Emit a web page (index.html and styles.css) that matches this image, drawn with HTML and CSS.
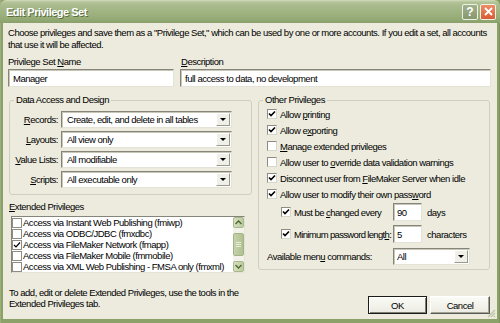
FILE: index.html
```html
<!DOCTYPE html>
<html lang="en">
<head>
    <meta charset="UTF-8">
    <meta name="viewport" content="width=device-width, initial-scale=1.0">
    <title>Edit Privilege Set</title>
    <link rel="stylesheet" href="styles.css">
</head>
<body>
    <div class="window">
        <div class="titlebar">
            <span class="title">Edit Privilege Set</span>
            <div class="caption-buttons">
                <span class="cap-btn help">?</span>
                <span class="cap-btn close">
                    <svg width="9" height="9" viewBox="0 0 9 9"><path d="M1 1 L8 8 M8 1 L1 8" stroke="#fff" stroke-width="1.8" fill="none"/></svg>
                </span>
            </div>
        </div>
        <div class="client">
            <p class="intro">Choose privileges and save them as a "Privilege Set," which can be used by one or more accounts. If you edit a set, all accounts<br>that use it will be affected.</p>

            <div class="name-row">
                <div class="field name-field">
                    <div class="field-label">Privilege Set <u>N</u>ame</div>
                    <div class="textbox">Manager</div>
                </div>
                <div class="field desc-field">
                    <div class="field-label"><u>D</u>escription</div>
                    <div class="textbox">full access to data, no development</div>
                </div>
            </div>

            <div class="main">
                <div class="left-col">
                    <fieldset class="group data-group">
                        <legend>Data Access and Design</legend>
                        <div class="access-grid">
                            <span class="row-label"><u>R</u>ecords:</span>
                            <div class="combo"><span class="combo-value">Create, edit, and delete in all tables</span><span class="combo-arrow"></span></div>
                            <span class="row-label"><u>L</u>ayouts:</span>
                            <div class="combo"><span class="combo-value">All view only</span><span class="combo-arrow"></span></div>
                            <span class="row-label"><u>V</u>alue Lists:</span>
                            <div class="combo"><span class="combo-value">All modifiable</span><span class="combo-arrow"></span></div>
                            <span class="row-label"><u>S</u>cripts:</span>
                            <div class="combo"><span class="combo-value">All executable only</span><span class="combo-arrow"></span></div>
                        </div>
                    </fieldset>

                    <div class="ext-label"><u>E</u>xtended Privileges</div>
                    <div class="listbox">
                        <ul class="list-items">
                            <li><span class="cb small"></span>Access via Instant Web Publishing (fmiwp)</li>
                            <li><span class="cb small"></span>Access via ODBC/JDBC (fmxdbc)</li>
                            <li><span class="cb small"><svg width="8" height="8" viewBox="0 0 8 8"><path d="M1 4 L3 6 L7 1.5" stroke="#000" stroke-width="1.2" fill="none"/></svg></span>Access via FileMaker Network (fmapp)</li>
                            <li><span class="cb small"></span>Access via FileMaker Mobile (fmmobile)</li>
                            <li><span class="cb small"></span>Access via XML Web Publishing - FMSA only (fmxml)</li>
                        </ul>
                        <div class="scrollbar">
                            <span class="sb-btn"><svg width="7" height="5" viewBox="0 0 7 5"><path d="M0.5 4 L3.5 1 L6.5 4" stroke="#4d6a2e" stroke-width="1.4" fill="none"/></svg></span>
                            <span class="sb-gap"></span>
                            <span class="sb-thumb"><i></i><i></i><i></i></span>
                            <span class="sb-gap"></span>
                            <span class="sb-btn"><svg width="7" height="5" viewBox="0 0 7 5"><path d="M0.5 1 L3.5 4 L6.5 1" stroke="#4d6a2e" stroke-width="1.4" fill="none"/></svg></span>
                        </div>
                    </div>
                    <p class="note">To add, edit or delete Extended Privileges, use the tools in the<br>Extended Privileges tab.</p>
                </div>

                <div class="right-col">
                    <fieldset class="group other-group">
                        <legend>Other Privileges</legend>
                        <div class="check-row"><span class="cb checked"><svg width="8" height="8" viewBox="0 0 8 8"><path d="M1 3.5 L3 5.5 L7 1.5" stroke="#000" stroke-width="1.6" fill="none"/></svg></span><span>Allow <u>p</u>rinting</span></div>
                        <div class="check-row"><span class="cb checked"><svg width="8" height="8" viewBox="0 0 8 8"><path d="M1 3.5 L3 5.5 L7 1.5" stroke="#000" stroke-width="1.6" fill="none"/></svg></span><span>Allow e<u>x</u>porting</span></div>
                        <div class="check-row"><span class="cb"></span><span><u>M</u>anage extended privileges</span></div>
                        <div class="check-row"><span class="cb"></span><span>Allow user to <u>o</u>verride data validation warnings</span></div>
                        <div class="check-row"><span class="cb checked"><svg width="8" height="8" viewBox="0 0 8 8"><path d="M1 3.5 L3 5.5 L7 1.5" stroke="#000" stroke-width="1.6" fill="none"/></svg></span><span>Disconnect user from <u>F</u>ileMaker Server when idle</span></div>
                        <div class="check-row"><span class="cb checked"><svg width="8" height="8" viewBox="0 0 8 8"><path d="M1 3.5 L3 5.5 L7 1.5" stroke="#000" stroke-width="1.6" fill="none"/></svg></span><span>Allow user to modify their own pass<u>w</u>ord</span></div>
                        <div class="check-row sub"><span class="cb checked"><svg width="8" height="8" viewBox="0 0 8 8"><path d="M1 3.5 L3 5.5 L7 1.5" stroke="#000" stroke-width="1.6" fill="none"/></svg></span><span class="sub-label">Must be <u>c</u>hanged every</span><span class="textbox small-box">90</span><span class="unit">days</span></div>
                        <div class="check-row sub second"><span class="cb checked"><svg width="8" height="8" viewBox="0 0 8 8"><path d="M1 3.5 L3 5.5 L7 1.5" stroke="#000" stroke-width="1.6" fill="none"/></svg></span><span class="sub-label tight">Minimum password lengt<u>h</u>:</span><span class="textbox small-box">5</span><span class="unit">characters</span></div>
                        <div class="menu-row">
                            <span class="menu-label">Available men<u>u</u> commands:</span>
                            <div class="combo menu-combo"><span class="combo-value">All</span><span class="combo-arrow"></span></div>
                        </div>
                    </fieldset>
                    <div class="buttons">
                        <span class="btn default">OK</span>
                        <span class="btn">Cancel</span>
                    </div>
                </div>
            </div>
        </div>
        <svg class="grip" width="10" height="10" viewBox="0 0 10 10">
            <path d="M9 2 L2 9 M9 5 L5 9 M9 8 L8 9" stroke="#b9c4a2" stroke-width="1.2" fill="none"/>
        </svg>
    </div>
</body>
</html>
```

FILE: styles.css
```css
* {
    box-sizing: border-box;
    margin: 0;
    padding: 0;
}

body {
    width: 500px;
    height: 323px;
    overflow: hidden;
    font-family: 'Liberation Sans', Arial, sans-serif;
    font-size: 9.5px;
    letter-spacing: -0.48px;
    color: #000;
    background: #8ba169;
}

u {
    text-decoration: underline;
    text-underline-offset: 1px;
}

.window {
    position: relative;
    width: 500px;
    height: 323px;
    display: flex;
    flex-direction: column;
    background: linear-gradient(to right, #a9bb8a 0, #8ba169 1px, #8ba169 499px, #6f8650 500px);
}

/* title bar */
.titlebar {
    height: 23px;
    display: flex;
    align-items: center;
    justify-content: space-between;
    padding: 0 4px 0 6px;
    background: linear-gradient(to bottom, #d3dcbd 0, #b4c498 2px, #a8ba8c 6px, #9db17e 14px, #92a873 20px, #8aa06a 23px);
    border-radius: 6px 6px 0 0;
}

.title {
    color: #fff;
    font-weight: bold;
    font-size: 11px;
    letter-spacing: -0.5px;
    text-shadow: 1px 1px 0 #5b6e3f;
}

.caption-buttons {
    display: flex;
    gap: 2px;
}

.cap-btn {
    width: 16px;
    height: 16px;
    display: flex;
    align-items: center;
    justify-content: center;
    border: 1px solid #eef2e4;
    border-radius: 2px;
    color: #fff;
    font-weight: bold;
    font-size: 12px;
    letter-spacing: 0;
}

.cap-btn.help {
    background: linear-gradient(to bottom, #a3b08e, #87976f);
}

.cap-btn.close {
    background: linear-gradient(to bottom, #ee8d66, #d85b32);
}

/* client area */
.client {
    flex: 1;
    margin: 0 3px 4px;
    padding: 4px 6px 0 5px;
    background: #ecebdd;
}

.intro {
    line-height: 12px;
}

.name-row {
    display: flex;
    gap: 6px;
    margin-top: 5px;
}

.name-field {
    width: 166px;
}

.desc-field {
    flex: 1;
}

.field-label {
    line-height: 12px;
    margin-bottom: 1px;
}

.desc-field .field-label {
    padding-left: 1px;
}

.textbox {
    height: 18px;
    display: flex;
    align-items: center;
    padding-left: 4px;
    background: #fff;
    border: 1px solid;
    border-color: #86857a #e4e3d8 #e4e3d8 #86857a;
    box-shadow: inset 1px 1px 0 #c9c7b8;
}

.main {
    display: flex;
    gap: 6px;
    margin-top: 7px;
    padding: 0 1px;
}

.left-col {
    width: 243px;
}

.right-col {
    width: 232px;
}

/* group boxes */
.group {
    border: 1px solid #cfcebf;
    border-radius: 3px;
    min-width: 0;
}

.group legend {
    line-height: 12px;
    padding: 0 2px;
}

.data-group {
    padding: 5px 19px 6px 4px;
}

.other-group legend {
    margin-left: -4px;
}

.access-grid {
    display: grid;
    grid-template-columns: 44px 171px;
    column-gap: 3px;
    row-gap: 3px;
    align-items: center;
}

.row-label {
    text-align: right;
}

.combo {
    height: 17px;
    display: flex;
    align-items: center;
    background: #fff;
    border: 1px solid;
    border-color: #86857a #e4e3d8 #e4e3d8 #86857a;
    box-shadow: inset 1px 1px 0 #c9c7b8;
}

.combo-value {
    flex: 1;
    padding-left: 5px;
}

.combo-arrow {
    width: 14px;
    height: 13px;
    margin-right: 1px;
    display: flex;
    align-items: center;
    justify-content: center;
    background: #f1f0e8;
    border: 1px solid;
    border-color: #ffffff #9a998e #9a998e #ffffff;
}

.combo-arrow::after {
    content: "";
    border-left: 3px solid transparent;
    border-right: 3px solid transparent;
    border-top: 3px solid #000;
}

.ext-label {
    margin-top: 6px;
    line-height: 12px;
}

.listbox {
    display: flex;
    width: 234px;
    height: 57px;
    margin: 3px 0 0 2px;
    background: #fff;
    border: 1px solid;
    border-color: #86857a #e4e3d8 #e4e3d8 #86857a;
}

.list-items {
    flex: 1;
    list-style: none;
}

.list-items li {
    height: 11px;
    display: flex;
    align-items: center;
    white-space: nowrap;
}

.cb {
    width: 10px;
    height: 10px;
    flex: none;
    display: flex;
    align-items: center;
    justify-content: center;
    margin-right: 3px;
    background: #fff;
    border: 1px solid;
    border-color: #8e8d82 #d8d7cc #d8d7cc #8e8d82;
}

.cb.small {
    margin-right: 1px;
    border-color: #8e8d82;
}

.scrollbar {
    width: 11px;
    display: flex;
    flex-direction: column;
    background: #f2f1ea;
}

.sb-btn {
    height: 11px;
    display: flex;
    align-items: center;
    justify-content: center;
    background: linear-gradient(to right, #d6dfc2, #bccb9f);
    border: 1px solid #a8b88c;
    border-radius: 2px;
}

.sb-gap {
    height: 5px;
}

.sb-thumb {
    flex: 1;
    display: flex;
    flex-direction: column;
    align-items: center;
    justify-content: center;
    gap: 1px;
    background: linear-gradient(to right, #c6d2ab, #b0c191);
    border: 1px solid #a3b386;
    border-radius: 2px;
}

.sb-thumb i {
    width: 5px;
    height: 1px;
    background: #e8eedc;
}

.note {
    margin-top: 14px;
    line-height: 11px;
}

/* other privileges */
.other-group {
    padding: 0 6px 4px 8px;
}

.check-row {
    height: 16px;
    display: flex;
    align-items: center;
    white-space: nowrap;
}

.check-row.sub {
    height: 18px;
    margin: 1px 0 0 14px;
}

.check-row.sub.second {
    margin-top: 4px;
}

.sub-label {
    width: 99px;
    flex: none;
    letter-spacing: -0.55px;
}

.sub-label.tight {
    letter-spacing: -0.66px;
}

.small-box {
    width: 29px;
    height: 18px;
    padding-left: 3px;
}

.unit {
    margin-left: 5px;
}

.menu-row {
    display: flex;
    align-items: center;
    margin-top: 5px;
}

.menu-label {
    width: 126px;
}

.menu-combo {
    width: 77px;
}

.menu-combo .combo-value {
    padding-left: 3px;
}

.buttons {
    display: flex;
    justify-content: flex-end;
    gap: 3px;
    margin-top: 26px;
}

.btn {
    width: 60px;
    height: 18px;
    display: flex;
    align-items: center;
    justify-content: center;
    background: linear-gradient(to bottom, #fbfbf7, #ecebe2);
    border: 1px solid;
    border-color: #ffffff #5a5a52 #5a5a52 #ffffff;
    box-shadow: inset -1px -1px 0 #a3a296;
}

.btn.default {
    width: 59px;
    border: 1px solid #1c1c18;
    box-shadow: inset 1px 1px 0 #fff, inset -1px -1px 0 #7d7c72;
}

.grip {
    position: absolute;
    right: 4px;
    bottom: 5px;
}
```
